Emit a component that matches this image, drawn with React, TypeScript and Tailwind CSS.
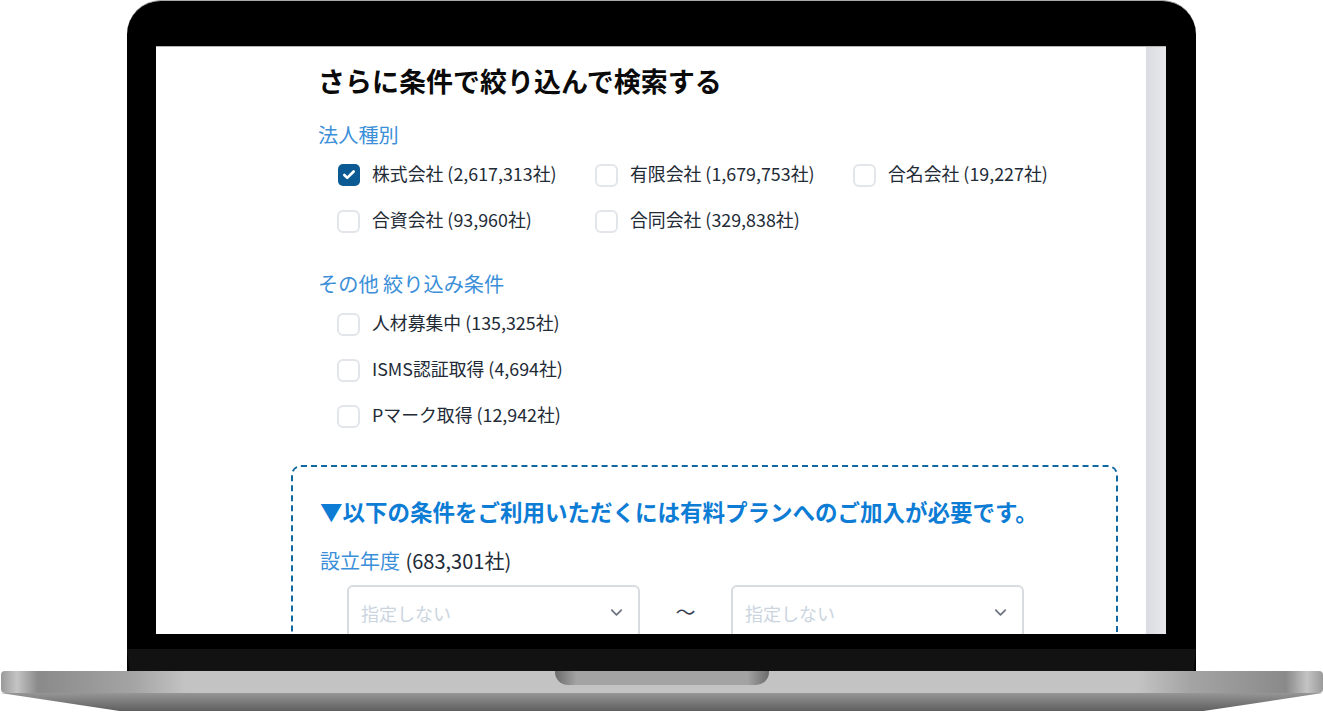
import { Check, ChevronDown } from "lucide-react";

const font = { fontFamily: '"Noto Sans CJK JP", "Noto Sans", sans-serif' };

function CheckItem({ label, checked }: { label: string; checked?: boolean }) {
  return (
    <label className="flex h-[24px] w-[258px] items-start">
      {checked ? (
        <span className="mt-[2px] flex h-[22px] w-[22px] shrink-0 items-center justify-center rounded-[5px] bg-[#0b5a94]">
          <Check className="h-[14px] w-[14px] text-white" strokeWidth={4.5} />
        </span>
      ) : (
        <span className="mt-[2px] -ml-[1px] h-[23px] w-[23px] shrink-0 rounded-[6px] border-2 border-[#e2e5ea] bg-white" />
      )}
      <span className="-mt-[1px] ml-[12px] text-[17.85px] leading-[24px] whitespace-nowrap text-[#222b36]">{label}</span>
    </label>
  );
}

function Select() {
  return (
    <div className="flex h-[70px] w-[293px] shrink-0 items-start justify-between rounded-[6px] border-2 border-[#d8dbe0] bg-white pt-[13px] pr-[12px] pl-[12px]">
      <span className="text-[18px] leading-[26px] text-[#cbd5e0]">指定しない</span>
      <ChevronDown className="mt-[3px] h-[19px] w-[19px] text-[#6b7280]" strokeWidth={2.2} />
    </div>
  );
}

function Screen() {
  return (
    <div className="flex h-[588px] overflow-hidden border-t border-[#b5b5b5] bg-white">
      <div className="flex-1 pt-[16px] pl-[135px]">
        <div className="pl-[27px]">
          <h2 className="text-[27px] leading-[36px] font-bold text-[#0a0a0a]">さらに条件で絞り込んで検索する</h2>
          <h3 className="mt-[21px] text-[20.2px] leading-[30px] text-[#3b8fd9]">法人種別</h3>
          <div className="mt-[12px] flex flex-col gap-[22px] pl-[20px]">
            <div className="flex">
              <CheckItem label="株式会社 (2,617,313社)" checked />
              <CheckItem label="有限会社 (1,679,753社)" />
              <CheckItem label="合名会社 (19,227社)" />
            </div>
            <div className="flex">
              <CheckItem label="合資会社 (93,960社)" />
              <CheckItem label="合同会社 (329,838社)" />
            </div>
          </div>
          <h3 className="mt-[37px] text-[20.2px] leading-[30px] text-[#3b8fd9]">その他 絞り込み条件</h3>
          <div className="mt-[12px] flex flex-col gap-[22px] pl-[20px]">
            <CheckItem label="人材募集中 (135,325社)" />
            <CheckItem label="ISMS認証取得 (4,694社)" />
            <CheckItem label="Pマーク取得 (12,942社)" />
          </div>
        </div>
        <div className="mt-[38px] w-[827px] rounded-[10px] border-2 border-dashed border-[#10689f] pt-[27px] pl-[27px]">
          <p className="text-[22.5px] leading-[34px] font-bold text-[#0c7cd5]">▼以下の条件をご利用いただくには有料プランへのご加入が必要です。</p>
          <p className="mt-[18px] text-[20px] leading-[30px] text-[#222b36]">
            <span className="mr-[1px] text-[#3b8fd9]">設立年度</span> (683,301社)
          </p>
          <div className="mt-[9px] flex items-start pl-[27px]">
            <Select />
            <span className="w-[91px] pt-[13px] text-center text-[20px] leading-[28px] text-[#374151]">〜</span>
            <Select />
          </div>
        </div>
      </div>
      <div className="w-5 shrink-0 bg-gradient-to-r from-[#dadbe0] to-[#e9e9ed]" />
    </div>
  );
}

export default function App() {
  return (
    <div className="flex h-[713px] w-[1323px] flex-col items-center overflow-hidden bg-white" style={font}>
      <div className="h-[671px] w-[1069px] shrink-0 rounded-t-[34px] border-t border-[#a8a8a8] bg-black pt-[45px]">
        <div className="mr-[30px] ml-[29px]">
          <Screen />
        </div>
        <div className="mt-[15px] h-[22px] bg-[#121212] [clip-path:polygon(0_0,100%_0,99.8%_100%,0.2%_100%)]" />
      </div>
      <div className="relative h-[22px] w-[1322px] shrink-0 rounded-[4px] bg-[linear-gradient(to_right,#9a9a9a_0%,#c4c4c4_1.2%,#8a8a8a_2.8%,#a4a4a4_10%,#c3c3c3_14%,#c3c3c3_86%,#a4a4a4_90%,#8a8a8a_97.2%,#c4c4c4_98.8%,#9a9a9a_100%)]">
        <div className="absolute top-0 left-[554px] h-[14px] w-[214px] rounded-b-[13px] bg-[linear-gradient(to_right,#6b6b6b_0%,#a3a3a3_10%,#a3a3a3_90%,#6b6b6b_100%)]" />
      </div>
      <div className="h-[18px] w-[1322px] shrink-0 bg-[linear-gradient(to_bottom,#969696,#5f5f5f)] [clip-path:polygon(0_0,100%_0,91%_100%,9%_100%)]" />
    </div>
  );
}
